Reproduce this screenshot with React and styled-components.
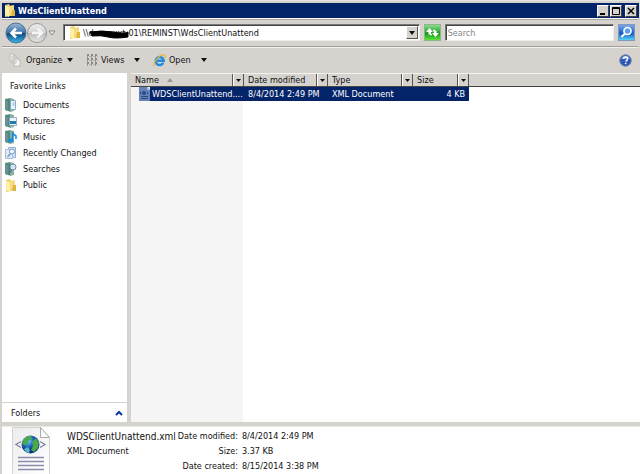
import React, { useState } from 'react';
import styled, { createGlobalStyle } from 'styled-components';


const GlobalStyle = createGlobalStyle`
	* {
		box-sizing: border-box;
	}

	body {
		margin: 0;
		background: #d6d3ce;
		color: #111;
		font-family: "DejaVu Sans Condensed", "DejaVu Sans", sans-serif;
		font-size: 9px;
		line-height: 14px;
	}

	button, input {
		font: inherit;
		color: inherit;
		border-radius: 0;
		padding: 0;
		margin: 0;
	}

	svg {
		display: block;
		flex: none;
	}
`;

const Window = styled.div`
	display: flex;
	flex-direction: column;
	height: 100vh;
	overflow: hidden;
	padding: 2px 0 0 2px;
	border-top: 1px solid #e6e4e0;
`;

const TitleBar = styled.header`
	display: flex;
	align-items: center;
	gap: 2px;
	height: 15px;
	margin-right: 1px;
	padding: 0 2px;
	background: #04246a;
	color: #fff;
	flex: none;
`;

const Title = styled.h1`
	flex: 1;
	margin: 0;
	font-size: 9px;
	font-weight: bold;
`;

const WindowButtons = styled.div`
	display: flex;
`;

const WindowButton = styled.button`
	display: grid;
	place-items: center;
	width: 12px;
	height: 12px;
	margin-left: ${props => (props.$apart ? '3px' : '1px')};
	background: #d6d3ce;
	border: 1px solid;
	border-color: #fff #404040 #404040 #fff;
`;

const NavBar = styled.form`
	display: flex;
	align-items: center;
	gap: 4px;
	height: 29px;
	margin: 0 2px 0 0;
	padding: 0 3px 0 3px;
	border-top: 1px solid #fff;
	border-bottom: 1px solid #a09d98;
	box-shadow: inset 0 1px #aaa7a2, 0 1px #f2f1ee;
	flex: none;
`;

const History = styled.div`
	display: flex;
	align-items: center;
	width: 54px;
`;

const PlainButton = styled.button`
	display: flex;
	align-items: center;
	background: none;
	border: 0;
`;

const Field = styled.div`
	display: flex;
	align-items: center;
	height: 17px;
	min-width: 0;
	flex: ${props => props.$grow} 1 0;
	background: #fff;
	border: 1px solid;
	border-color: #777 #eee #eee #777;
	box-shadow: inset 1px 1px #444;
`;

const TextInput = styled.input`
	flex: 1;
	min-width: 0;
	padding-left: 2px;
	border: 0;
	background: none;
	outline: none;

	&::placeholder {
		color: #888;
		opacity: 1;
	}
`;

const Address = styled.div`
	position: relative;
	display: flex;
	align-items: center;
	flex: 1;
	padding-left: 5px;
`;

const Redaction = styled.svg`
	position: absolute;
	left: 12px;
	top: 2px;
`;

const DropButton = styled.button`
	display: grid;
	place-items: center;
	width: 12px;
	height: 13px;
	margin-right: 1px;
	background: #d6d3ce;
	border: 1px solid;
	border-color: #fff #555 #555 #fff;
`;

const SquareButton = styled.button`
	display: grid;
	place-items: center;
	width: 17px;
	height: 17px;
	border: 1px solid ${props => props.$edge};
	background: ${props => props.$fill};
	flex: none;
`;

const Toolbar = styled.div`
	display: flex;
	align-items: center;
	gap: 13px;
	height: 26px;
	padding: 0 8px 0 7px;
	flex: none;
`;

const ToolButton = styled(PlainButton)`
	width: ${props => props.$width};
	gap: 3px;
`;

const ToolArrow = styled.span`
	margin-left: auto;
`;

const HelpButton = styled(PlainButton)`
	margin-left: auto;
`;

const Main = styled.div`
	display: flex;
	gap: 4px;
	flex: 1;
	min-height: 0;
`;

const Sidebar = styled.nav`
	display: flex;
	flex-direction: column;
	width: 125px;
	background: #fff;
	flex: none;
`;

const SidebarTitle = styled.h2`
	margin: 0;
	padding: 6px 8px 4px;
	font-size: 9px;
	font-weight: normal;
`;

const Links = styled.ul`
	flex: 1;
	margin: 0;
	padding: 0;
	list-style: none;
`;

const SideLink = styled.a`
	display: flex;
	align-items: center;
	gap: 6px;
	height: 16px;
	padding-left: 3px;
	color: inherit;
	text-decoration: none;
`;

const FoldersButton = styled(PlainButton)`
	justify-content: space-between;
	height: 20px;
	padding: 0 4px 0 9px;
	border-top: 1px solid #d6d3ce;
`;

const Files = styled.main`
	flex: 1;
	min-width: 0;
	background: linear-gradient(to right, #f5f5f5 112px, #fff 112px);
`;

const FileTable = styled.table`
	width: 100%;
	table-layout: fixed;
	border-spacing: 0;
	text-align: left;
`;

const HeadCell = styled.th`
	width: ${props => props.$width};
	height: 14px;
	padding: 0;
	background: #d6d3ce;
	border-top: 1px solid #f4f3f0;
	border-bottom: 1px solid #444;
	font-weight: normal;
`;

const HeadContent = styled.div`
	display: flex;
	align-items: center;
	height: 12px;
	padding-left: 4px;
`;

const HeadLabel = styled.span`
	display: flex;
	align-items: center;
	gap: 8px;
	flex: 1;
	line-height: 12px;
	white-space: nowrap;
`;

const HeadDrop = styled.button`
	display: grid;
	place-items: center;
	width: 12px;
	height: 12px;
	background: none;
	border: 0;
	border-left: 1px solid #555;
	border-right: 1px solid #555;
	box-shadow: inset 1px 0 #fff;
`;

const Cell = styled.td`
	height: 14px;
	padding: 0 4px;
	background: ${props => (props.$selected ? '#04246a' : 'transparent')};
	color: #fff;
	white-space: nowrap;
	text-align: ${props => props.$align || 'left'};
`;

const NameCell = styled(Cell)`
	padding: 0 0 0 7px;
	background: none;
`;

const FileName = styled.div`
	display: flex;
	height: 14px;
`;

const FileNameText = styled.span`
	flex: 1;
	min-width: 0;
	padding-left: 2px;
	overflow: hidden;
	background: #04246a;
`;

const Details = styled.footer`
	display: flex;
	margin-top: 4px;
	padding: 0 0 0 9px;
	min-height: 48px;
	background: #fff;
	border-top: 1px solid #eceae6;
	flex: none;
`;

const Summary = styled.div`
	padding: 2px 2px 0 16px;
	line-height: 15px;
`;

const SummaryName = styled.div`
	font-size: 10px;
`;

const Facts = styled.dl`
	display: grid;
	grid-template-columns: auto auto;
	column-gap: 4px;
	align-content: start;
	margin: 0;
	padding-top: 2px;
	line-height: 15px;
`;

const FactLabel = styled.dt`
	text-align: right;
`;

const FactValue = styled.dd`
	margin: 0;
`;


const Arrow = () => (
	<svg width="6" height="4" viewBox="0 0 6 4"><path d="M0 0h6L3 4z" fill="#111" /></svg>
);

const SmallArrow = () => (
	<svg width="5" height="3" viewBox="0 0 5 3"><path d="M0 0h5L2.5 3z" fill="#111" /></svg>
);

const FolderIcon = () => (
	<svg width="12" height="13" viewBox="0 0 12 13">
		<path d="M1 1l4-1 1 2v10l-5 1z" fill="#edd268" />
		<path d="M5 2l5-1v11H5z" fill="#f3dc80" />
		<path d="M1 2l4 1v10l-4-2z" fill="#fff0a5" />
		<path d="M8 6h3v6H7z" fill="#dfb63c" />
	</svg>
);

const BackIcon = () => (
	<svg width="22" height="22" viewBox="0 0 22 22">
		<defs>
			<linearGradient id="back" x2="0" y2="1">
				<stop offset="0" stopColor="#9cb9d7" />
				<stop offset=".48" stopColor="#3c73ad" />
				<stop offset=".52" stopColor="#104782" />
				<stop offset="1" stopColor="#37b9ea" />
			</linearGradient>
		</defs>
		<circle cx="11" cy="11" r="10" fill="url(#back)" stroke="#54708d" />
		<path d="M17 11H7M11 6.500l-4.500 4.500 4.500 4.500" fill="none" stroke="#fff" strokeWidth="2.600" />
	</svg>
);

const ForwardIcon = () => (
	<svg width="21" height="22" viewBox="0 0 21 22">
		<defs>
			<linearGradient id="forward" x2="0" y2="1">
				<stop offset="0" stopColor="#eee" />
				<stop offset=".5" stopColor="#d2d2d2" />
				<stop offset=".52" stopColor="#bbb" />
				<stop offset="1" stopColor="#e8e8e8" />
			</linearGradient>
		</defs>
		<circle cx="10" cy="11" r="9.500" fill="url(#forward)" stroke="#999" />
		<path d="M5 11h9M10.500 6.500L15 11l-4.500 4.500" fill="none" stroke="#f5f5f5" strokeWidth="2.400" />
	</svg>
);

const RefreshIcon = () => (
	<svg width="15" height="15" viewBox="0 0 15 15">
		<path d="M4.500 3L1 7h2.500v2.500H6V7h2zM10.500 12L14 8h-2.500V5.500H9V8H7z" fill="#fff" />
		<path d="M5 9.500h2M8 5.500h2" stroke="#fff" strokeWidth="1.500" />
	</svg>
);

const MagnifierIcon = () => (
	<svg width="15" height="15" viewBox="0 0 15 15">
		<circle cx="8.500" cy="6" r="3.500" fill="#5c9de6" stroke="#fff" strokeWidth="1.700" />
		<path d="M6 8.500L2.500 12" stroke="#fff" strokeWidth="2" />
	</svg>
);

const HelpIcon = () => (
	<svg width="13" height="13" viewBox="0 0 13 13">
		<circle cx="6.500" cy="6.500" r="5.800" fill="#2d59b6" stroke="#7d8ba8" />
		<path d="M2 5a4.700 4.700 0 0 1 9 0z" fill="#7598d9" />
		<path d="M4.700 5q0-2 1.900-2t1.900 1.700-1.900 2.600" fill="none" stroke="#fff" strokeWidth="1.400" />
		<path d="M5.900 8.700h1.500v1.400H5.900z" fill="#fff" />
	</svg>
);

const OrganizeIcon = () => (
	<svg width="14" height="14" viewBox="0 0 14 14">
		<g fill="#f6f5f3" stroke="#b5b3af" strokeWidth=".8">
			<path d="M1 1h4v7H1zM3 3h4v7H3zM5 5h4l2 2v6H5z" />
			<path d="M9 5v2h2" fill="none" />
		</g>
	</svg>
);

const ViewsIcon = () => (
	<svg width="12" height="12" viewBox="0 0 12 12">
		<path d="M1.500 0v12M5.500 0v12M9.500 0v12" stroke="#9c9a97" />
		<path d="M1 1h2M5 1h2M9 1h2M1 5h2M5 5h2M9 5h2M1 9h2M5 9h2M9 9h2" stroke="#8b8987" strokeWidth="2" />
		<path d="M3 2.500h2M7 2.500h2M11 2.500h1M3 6.500h2M7 6.500h2M11 6.500h1M3 10.500h2M7 10.500h2M11 10.500h1" stroke="#b5b2ae" />
	</svg>
);

const BrowserIcon = () => (
	<svg width="13" height="13" viewBox="0 0 13 13">
		<path d="M10.300 8.800A4 4 0 1 1 10.700 6.700H3.500" fill="none" stroke="#238bdb" strokeWidth="2.500" />
		<path d="M1.500 12C-1 9 8-1 12 1q1 .7-.5 2.800" fill="none" stroke="#e8b53c" strokeWidth="1.300" />
	</svg>
);

// a green book with an overlay that tells the links apart
const BookIcon = ({ children }) => (
	<svg width="12" height="14" viewBox="0 0 12 14">
		<path d="M0 1l6-1v14l-6-2z" fill="#4d8b78" />
		<path d="M5 0l4 1v12l-4 1z" fill="#8db0a3" />
		<path d="M0 2l3 1v9l-3-1z" fill="#698f99" />
		{children}
	</svg>
);

const overlays = {
	documents: <path d="M5.500 2.500h5v9h-5zM7.500 5h2M7.500 7h2" fill="#edf5fb" stroke="#6c98bd" strokeWidth=".8" />,
	pictures: (
		<>
			<path d="M4.500 3.500h7v8h-7z" fill="#e9f5fa" stroke="#819fb4" strokeWidth=".8" />
			<path d="M5 7h6v3H5z" fill="#237ba8" />
		</>
	),
	music: (
		<>
			<path d="M7.500 10V2q0 2 3.500 4v3" fill="none" stroke="#168de0" strokeWidth="1.500" />
			<ellipse cx="6" cy="10.500" rx="2.500" ry="2" fill="#168de0" />
		</>
	),
	searches: (
		<>
			<circle cx="8" cy="5" r="3" fill="#d7e7f3" stroke="#6e8ca8" />
			<path d="M6.500 7.500L4 12" stroke="#567690" strokeWidth="1.500" />
		</>
	),
};

const RecentIcon = () => (
	<svg width="12" height="14" viewBox="0 0 12 14">
		<path d="M3.500 1.500h7v10h-7z" fill="#d5e4f4" stroke="#91afd0" />
		<path d="M.5 3.500h7v9h-7z" fill="#dfebf7" stroke="#a3bfdd" />
		<circle cx="7" cy="5.500" r="2.500" fill="#f1f7fd" stroke="#7599c4" />
		<path d="M5.500 7.500L2.500 11" stroke="#7599c4" strokeWidth="1.400" />
	</svg>
);

const RowIcon = () => (
	<svg width="12" height="14" viewBox="0 0 12 14">
		<path d="M1 0h8l3 3v11H1z" fill="#6681b7" />
		<path d="M9 0v3h3z" fill="#a6b8d9" />
		<path d="M3 5l-1 1 1 1M9 5l1 1-1 1M3 9.500h7M3 11.500h7" fill="none" stroke="#2c477f" />
		<circle cx="6" cy="6" r="2" fill="#234f8d" />
	</svg>
);

const XmlIcon = () => (
	<svg width="40" height="47" viewBox="0 0 40 47">
		<defs>
			<linearGradient id="page" x2="1" y2="1">
				<stop offset="0" stopColor="#ececec" />
				<stop offset="1" stopColor="#fff" />
			</linearGradient>
			<radialGradient id="globe" cx=".35" cy=".3">
				<stop offset="0" stopColor="#8ed8ff" />
				<stop offset=".5" stopColor="#2b7fd0" />
				<stop offset="1" stopColor="#10337f" />
			</radialGradient>
		</defs>
		<path d="M1.500 47V.5h28l9 10V47" fill="url(#page)" stroke="#d4d4d4" />
		<path d="M29.500.5v10h9z" fill="#fafafa" stroke="#aaa" />
		<path d="M10 14.500L5 17.500l5 3M29 14.500l5 3-5 3" fill="none" stroke="#8585aa" strokeWidth="1.400" />
		<circle cx="19.500" cy="17.500" r="9" fill="url(#globe)" />
		<path d="M13 12q3-4 7-3l1 3-3 1-1 4-4 1-2-2zM21 15l4-4 3 5-1 5-4 4-3-2 2-4z" fill="#49a94b" />
		<path d="M13 22l4-2 2 3-1 3q-3 0-5-4z" fill="#55b8ca" />
		<path d="M7 30.500h26M7 34.500h26M7 38.500h26M7 42.500h26" stroke="#8b8bad" strokeWidth="1.500" />
	</svg>
);


const favorites = [
	{ label: 'Documents', icon: <BookIcon>{overlays.documents}</BookIcon> },
	{ label: 'Pictures', icon: <BookIcon>{overlays.pictures}</BookIcon> },
	{ label: 'Music', icon: <BookIcon>{overlays.music}</BookIcon> },
	{ label: 'Recently Changed', icon: <RecentIcon /> },
	{ label: 'Searches', icon: <BookIcon>{overlays.searches}</BookIcon> },
	{ label: 'Public', icon: <FolderIcon /> },
];

const columns = [
	{ label: 'Name', width: '113px', sorted: true },
	{ label: 'Date modified', width: '84px' },
	{ label: 'Type', width: '85px' },
	{ label: 'Size', width: '56px' },
];

const tools = [
	{ label: 'Organize', width: '64px', icon: <OrganizeIcon /> },
	{ label: 'Views', width: '54px', icon: <ViewsIcon /> },
	{ label: 'Open', width: '54px', icon: <BrowserIcon /> },
];

const facts = [
	['Date modified:', '8/4/2014 2:49 PM'],
	['Size:', '3.37 KB'],
	['Date created:', '8/15/2014 3:38 PM'],
];


const App = () => {
	const [path, setPath] = useState('\\\\dxxxxxxt-01\\REMINST\\WdsClientUnattend');
	const [query, setQuery] = useState('');

	return (
		<>
			<GlobalStyle />
			<Window>
				<TitleBar>
					<FolderIcon />
					<Title>WdsClientUnattend</Title>
					<WindowButtons>
						<WindowButton aria-label="Minimize">
							<svg width="8" height="8" viewBox="0 0 8 8"><path d="M1 6h5v2H1z" /></svg>
						</WindowButton>
						<WindowButton aria-label="Maximize">
							<svg width="8" height="8" viewBox="0 0 8 8"><path d="M.5.5h7v7h-7zM0 1.500h8" fill="none" stroke="#000" /></svg>
						</WindowButton>
						<WindowButton aria-label="Close" $apart>
							<svg width="8" height="8" viewBox="0 0 8 8"><path d="M1 1l6 6M7 1L1 7" stroke="#000" strokeWidth="1.500" /></svg>
						</WindowButton>
					</WindowButtons>
				</TitleBar>

				<NavBar onSubmit={e => e.preventDefault()}>
					<History>
						<PlainButton type="button" aria-label="Back"><BackIcon /></PlainButton>
						<PlainButton type="button" aria-label="Forward"><ForwardIcon /></PlainButton>
						<PlainButton type="button" aria-label="Recent pages">
							<svg width="8" height="6" viewBox="0 0 8 6"><path d="M1 1h6L4 5z" fill="#eee" stroke="#888" /></svg>
						</PlainButton>
					</History>
					<Field $grow={356}>
						<Address>
							<FolderIcon />
							<TextInput aria-label="Address" value={path} onChange={e => setPath(e.target.value)} />
							<Redaction width="56" height="12" viewBox="0 0 56 12">
								<path d="M14 4q12-2 23 0t15 0v5q-13 2-20 0T16 8z" fill="#000" stroke="#000" strokeLinejoin="round" />
							</Redaction>
						</Address>
						<DropButton type="button" aria-label="Previous locations"><Arrow /></DropButton>
					</Field>
					<SquareButton type="button" aria-label="Refresh" $edge="#8bb68b" $fill="linear-gradient(#8edb8e, #22a52d 50%, #109018 52%, #5de23d)">
						<RefreshIcon />
					</SquareButton>
					<Field $grow={168}>
						<TextInput aria-label="Search" placeholder="Search" value={query} onChange={e => setQuery(e.target.value)} />
					</Field>
					<SquareButton aria-label="Start search" $edge="#8299bd" $fill="linear-gradient(#7aa9e9, #2360cb 50%, #164ebf 52%, #55d4fa)">
						<MagnifierIcon />
					</SquareButton>
				</NavBar>

				<Toolbar>
					{tools.map(tool => (
						<ToolButton key={tool.label} $width={tool.width}>
							{tool.icon}
							<span>{tool.label}</span>
							<ToolArrow><Arrow /></ToolArrow>
						</ToolButton>
					))}
					<HelpButton aria-label="Help"><HelpIcon /></HelpButton>
				</Toolbar>

				<Main>
					<Sidebar>
						<SidebarTitle>Favorite Links</SidebarTitle>
						<Links>
							{favorites.map(item => (
								<li key={item.label}>
									<SideLink href="#">
										{item.icon}
										{item.label}
									</SideLink>
								</li>
							))}
						</Links>
						<FoldersButton>
							Folders
							<svg width="8" height="6" viewBox="0 0 8 6"><path d="M1 5l3-3 3 3" fill="none" stroke="#0838a5" strokeWidth="2" /></svg>
						</FoldersButton>
					</Sidebar>

					<Files>
						<FileTable>
							<thead>
								<tr>
									{columns.map(column => (
										<HeadCell key={column.label} $width={column.width}>
											<HeadContent>
												<HeadLabel>
													{column.label}
													{column.sorted && (
														<svg width="6" height="4" viewBox="0 0 6 4"><path d="M3 0l3 4H0z" fill="#999" /></svg>
													)}
												</HeadLabel>
												<HeadDrop aria-label={`Filter ${column.label}`}><SmallArrow /></HeadDrop>
											</HeadContent>
										</HeadCell>
									))}
									<HeadCell as="td" />
								</tr>
							</thead>
							<tbody>
								<tr>
									<NameCell>
										<FileName>
											<RowIcon />
											<FileNameText title="WDSClientUnattend.xml">WDSClientUnattend....</FileNameText>
										</FileName>
									</NameCell>
									<Cell $selected>8/4/2014 2:49 PM</Cell>
									<Cell $selected>XML Document</Cell>
									<Cell $selected $align="right">4 KB</Cell>
									<td />
								</tr>
							</tbody>
						</FileTable>
					</Files>
				</Main>

				<Details>
					<XmlIcon />
					<Summary>
						<SummaryName>WDSClientUnattend.xml</SummaryName>
						<div>XML Document</div>
					</Summary>
					<Facts>
						{facts.map(([label, value]) => (
							<React.Fragment key={label}>
								<FactLabel>{label}</FactLabel>
								<FactValue>{value}</FactValue>
							</React.Fragment>
						))}
					</Facts>
				</Details>
			</Window>
		</>
	);
};


export default App;
